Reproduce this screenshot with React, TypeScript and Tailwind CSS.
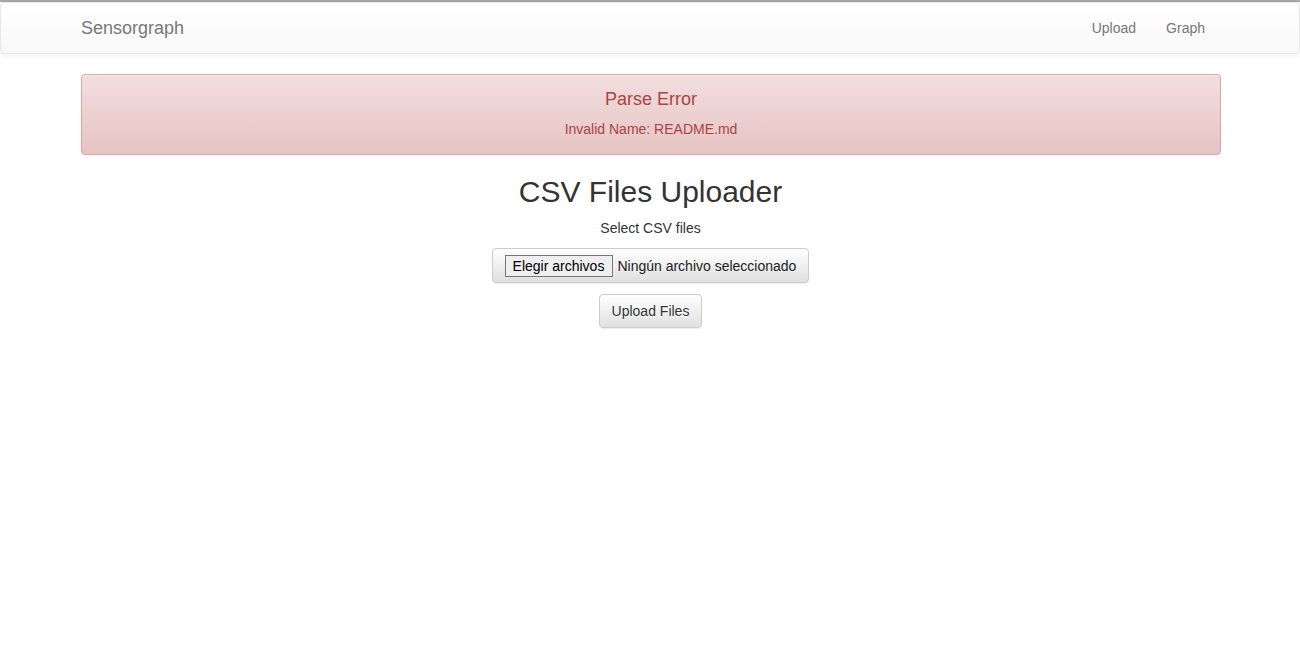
import React from "react";

export default function App() {
  const font = { fontFamily: '"Liberation Sans", Arial, Helvetica, sans-serif' };
  return (
    <div className="min-h-[656px] bg-white text-[14px] leading-[20px] text-[#333]" style={font}>
      <div className="h-[2px] bg-[#a9a9a9]" />
      <nav className="h-[52px] rounded-[4px] border border-[#e7e7e7] bg-gradient-to-b from-white to-[#f8f8f8] shadow-[inset_0_1px_0_rgba(255,255,255,0.15),0_1px_5px_rgba(0,0,0,0.075)]">
        <div className="mx-auto flex w-[1170px] items-center justify-between pl-[16px] pr-[15px]">
          <a className="block py-[15px] text-[18px] leading-[20px] text-[#777]">Sensorgraph</a>
          <ul className="flex">
            <li>
              <a className="block px-[15px] py-[15px] leading-[20px] text-[#777]">Upload</a>
            </li>
            <li>
              <a className="block px-[15px] py-[15px] leading-[20px] text-[#777]">Graph</a>
            </li>
          </ul>
        </div>
      </nav>
      <div className="mx-auto mt-[20px] w-[1170px] pl-[16px] pr-[14px]">
        <div className="h-[81px] rounded-[4px] border border-[#dca7a7] bg-gradient-to-b from-[#f2dede] to-[#e7c3c3] px-[15px] pt-[14px] pb-[16px] text-center text-[#a94442] shadow-[inset_0_1px_0_rgba(255,255,255,0.25),0_1px_2px_rgba(0,0,0,0.05)]">
          <h4 className="mt-[0px] text-[18px] leading-[20px]">Parse Error</h4>
          <p className="mt-[10px] leading-[20px]">Invalid Name: README.md</p>
        </div>
      </div>
      <div className="mx-auto w-[1170px] pl-[16px] pr-[15px]">
        <div className="flex flex-col items-center">
          <h2 className="mt-[20px] text-[30px] leading-[33px] text-[#333]">CSV Files Uploader</h2>
          <label className="mt-[10px] leading-[20px]">Select CSV files</label>
          <div className="mt-[10px] flex h-[35px] items-center rounded-[4px] border border-[#ccc] bg-gradient-to-b from-white to-[#e0e0e0] px-[12px] shadow-[inset_0_1px_0_rgba(255,255,255,0.15),0_1px_1px_rgba(0,0,0,0.075)]">
            <span className="flex h-[22px] items-center border border-[#767676] bg-[#efefef] pl-[7px] pr-[8px] text-[14px] text-black">
              Elegir archivos
            </span>
            <span className="ml-[4px] text-[14px] text-[#222]">Ningún archivo seleccionado</span>
          </div>
          <button className="mt-[11px] h-[34px] rounded-[4px] border border-[#ccc] bg-gradient-to-b from-white to-[#e0e0e0] px-[12px] text-[14px] leading-[20px] text-[#333] shadow-[inset_0_1px_0_rgba(255,255,255,0.15),0_1px_1px_rgba(0,0,0,0.075)] [text-shadow:0_1px_0_#fff]">
            Upload Files
          </button>
        </div>
      </div>
    </div>
  );
}
